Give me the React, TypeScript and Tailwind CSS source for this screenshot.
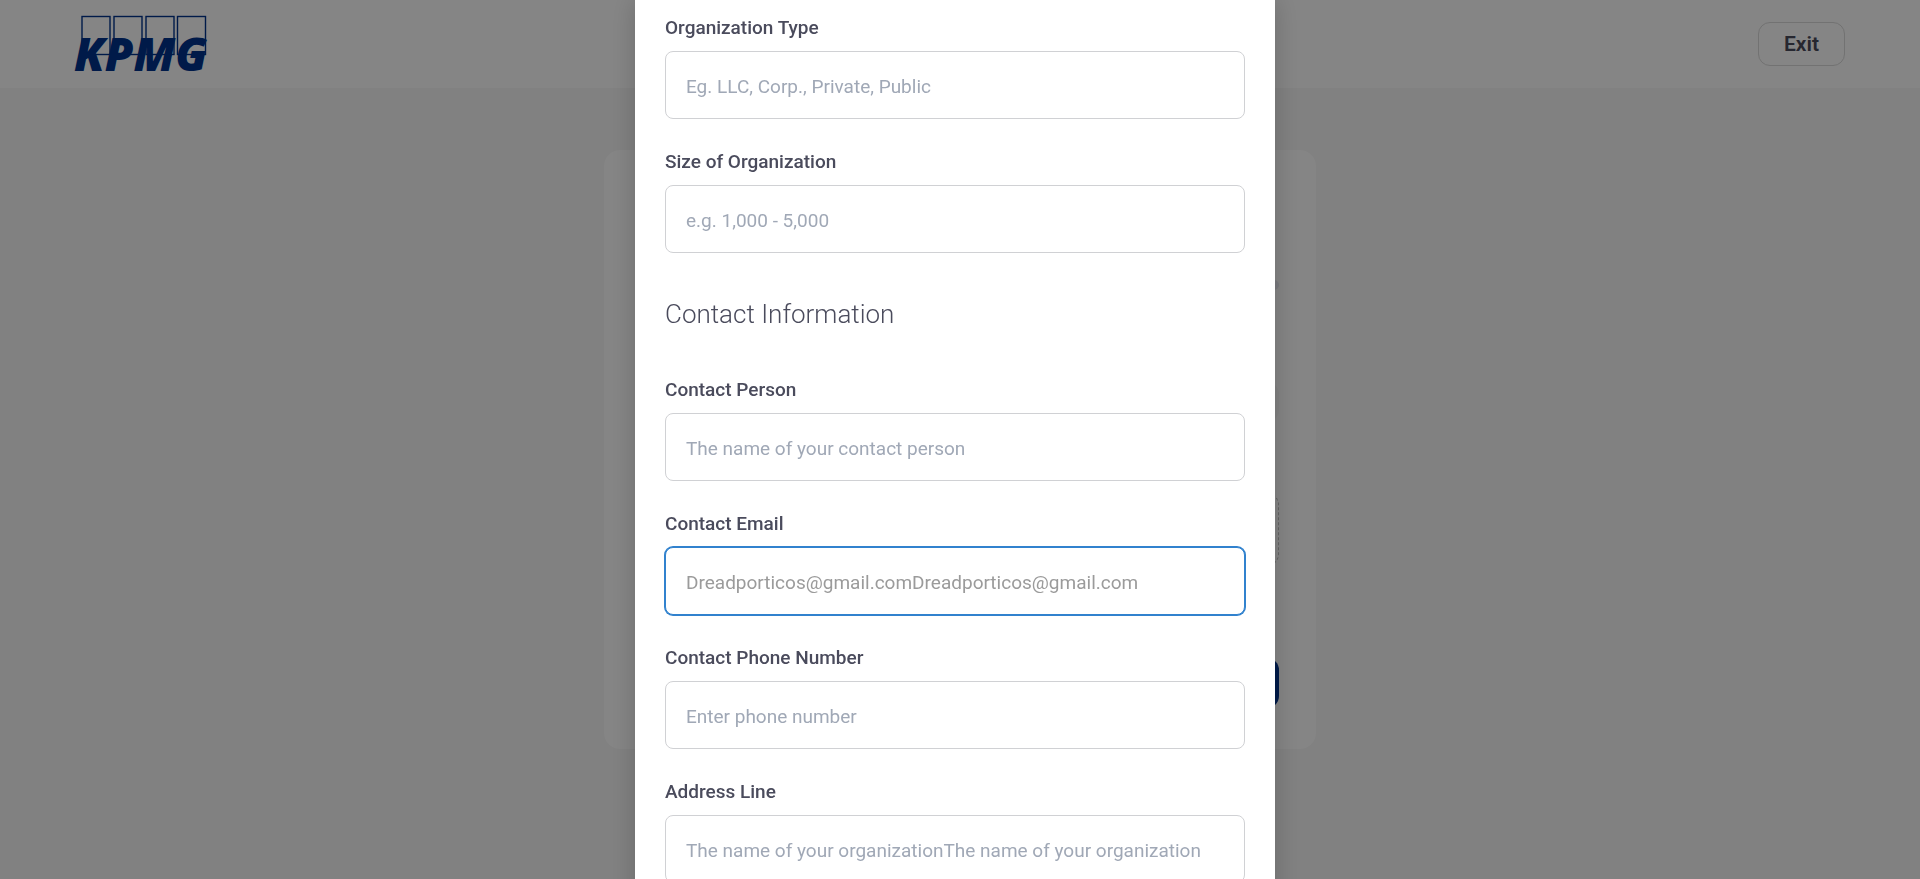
import React from "react";

type FieldProps = {
  id: string;
  label: string;
  placeholder: string;
  type?: string;
  active?: boolean;
};

function Field({ id, label, placeholder, type = "text", active = false }: FieldProps) {
  const tone = active
    ? "border-[#3182ce] ring-1 ring-[#3182ce] placeholder:text-[#9b9b9b]"
    : "border-[#d0d1d4] placeholder:text-[#a0a8b6]";
  return (
    <div className="flex flex-col gap-2">
      <label htmlFor={id} className="text-[19px] leading-[30px] font-medium text-[#4a4b5c]">
        {label}
      </label>
      <input
        id={id}
        type={type}
        placeholder={placeholder}
        className={`h-[68px] w-full rounded-lg border bg-white px-5 pt-0.5 text-[19px] text-[#2d3748] outline-none placeholder:opacity-100 ${tone}`}
      />
    </div>
  );
}

function Logo() {
  return (
    <svg role="img" aria-label="KPMG" viewBox="0 0 140 72" className="h-[72px] w-[140px] overflow-visible">
      <g fill="none" stroke="#00338d" strokeWidth="1.4">
        <rect x="7" y="8.5" width="28" height="38" />
        <rect x="39" y="8.5" width="28" height="38" />
        <rect x="71" y="8.5" width="28" height="38" />
        <rect x="102.5" y="8.5" width="28" height="38" />
      </g>
      <text x="-1" y="62.5" fill="#00338d" className="font-['Open_Sans',sans-serif] text-[46px] font-extrabold italic">
        KPMG
      </text>
    </svg>
  );
}

export default function App() {
  return (
    <div className="flex h-screen flex-col overflow-hidden bg-[#f7f7f7] font-['Roboto','Liberation_Sans',sans-serif]">
      <header className="flex h-22 shrink-0 items-center justify-between bg-white px-[75px]">
        <Logo />
        <button type="button" className="h-11 rounded-xl border border-[#dadada] px-[25px] pt-0.5 text-[21px] font-semibold text-[#4a4b5c]">
          Exit
        </button>
      </header>

      <main className="flex justify-center pt-[62px]">
        <section className="flex h-[599px] w-[712px] flex-col rounded-2xl bg-white px-[37px] pt-[130px]">
          <div className="h-[10px] rounded-full bg-[#e9ebf2]" />
          <div className="mt-[92px] h-10 rounded-xl bg-[#f9f9f9]" />
          <div className="mt-[71px] h-[73px] rounded-xl border border-dashed border-[#c0c0c0]" />
          <div className="mt-[92px] h-[50px] rounded-xl bg-[#00338d]" />
        </section>
      </main>

      <div className="fixed inset-0 flex justify-center overflow-hidden bg-black/48 pr-[10px]">
        <div role="dialog" aria-modal="true" aria-label="Organization details" className="h-max w-[640px] bg-white px-[30px] pt-[13px] pb-12 shadow-[0_0_24px_rgba(0,0,0,0.2)]">
          <form>
            <div className="flex flex-col gap-7">
              <Field id="org-type" label="Organization Type" placeholder="Eg. LLC, Corp., Private, Public" />
              <Field id="org-size" label="Size of Organization" placeholder="e.g. 1,000 - 5,000" />
            </div>
            <h2 className="my-10 text-[26px] leading-[42px] font-light text-[#4a4b5c]">Contact Information</h2>
            <div className="flex flex-col gap-7">
              <Field id="person" label="Contact Person" placeholder="The name of your contact person" />
              <Field id="email" type="email" active label="Contact Email" placeholder="Dreadporticos@gmail.comDreadporticos@gmail.com" />
              <Field id="phone" type="tel" label="Contact Phone Number" placeholder="Enter phone number" />
              <Field id="address" label="Address Line" placeholder="The name of your organizationThe name of your organization" />
            </div>
          </form>
        </div>
      </div>
    </div>
  );
}
